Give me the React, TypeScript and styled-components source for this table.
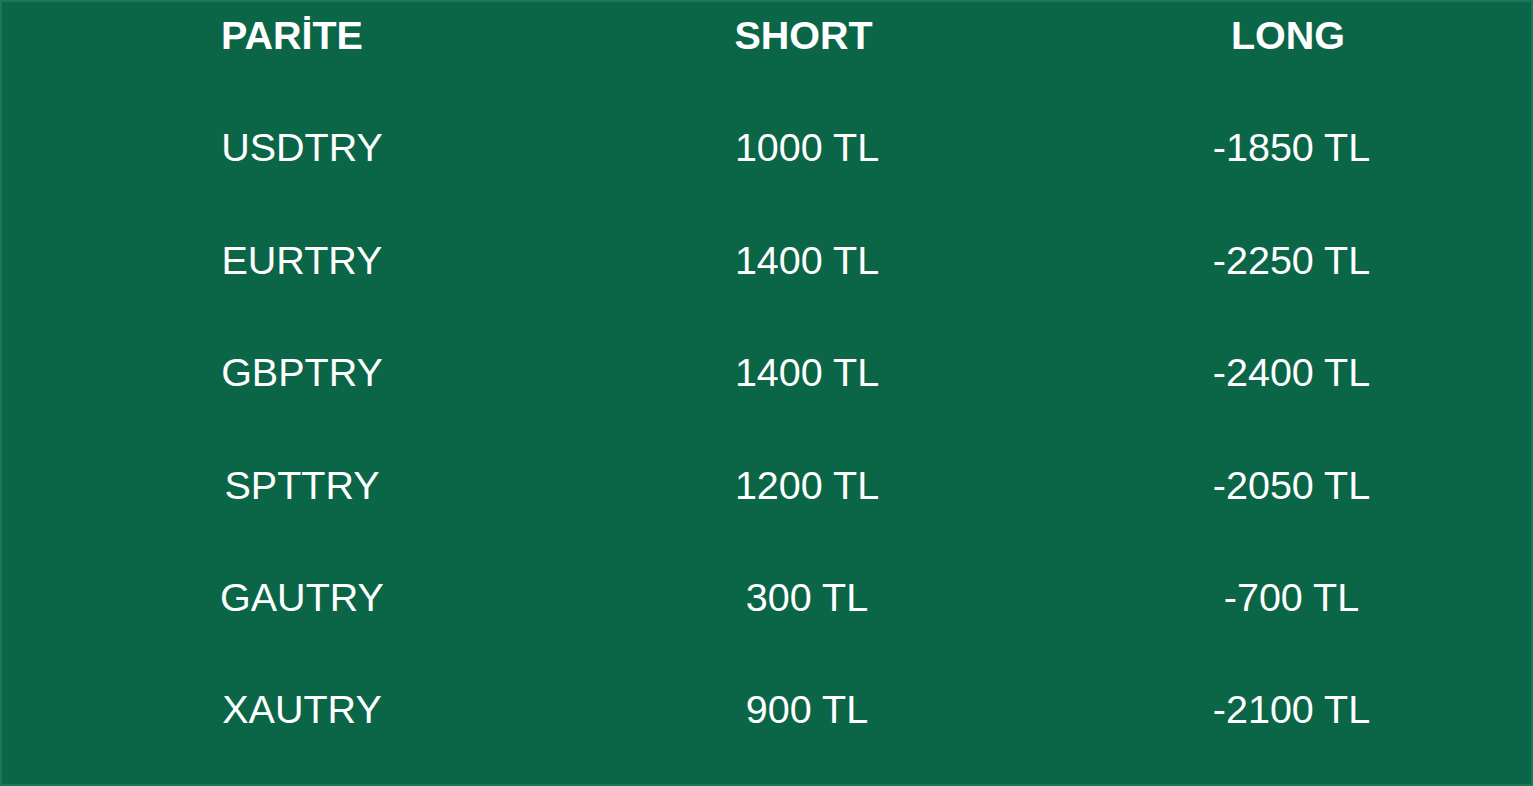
import React from "react";
import styled, { createGlobalStyle } from "styled-components";

const Global = createGlobalStyle`
  html, body { margin: 0; padding: 0; background: #0b6648; }
  * { box-sizing: border-box; }
`;

const Board = styled.div`
  width: 1533px;
  height: 786px;
  background: #0b6648;
  border: 2px solid #16795a;
  font-family: "Liberation Sans", Arial, sans-serif;
  color: #ffffff;
  display: flex;
  flex-direction: column;
  overflow: hidden;
`;

const Row = styled.div<{ $header?: boolean }>`
  display: grid;
  grid-template-columns: 500px 510px 459px;
  align-items: center;
  height: ${(p) => (p.$header ? "68px" : "112.4px")};
  margin-bottom: ${(p) => (p.$header ? "22px" : "0")};
  padding-left: 50px;
`;

const Cell = styled.div<{ $bold?: boolean; $shift?: number }>`
  text-align: center;
  font-size: 39.5px;
  font-weight: ${(p) => (p.$bold ? 700 : 400)};
  line-height: 1.15;
  white-space: nowrap;
  padding-right: ${(p) => (p.$shift ? `${p.$shift}px` : "0")};
`;

const rows: [string, string, string][] = [
  ["USDTRY", "1000 TL", "-1850 TL"],
  ["EURTRY", "1400 TL", "-2250 TL"],
  ["GBPTRY", "1400 TL", "-2400 TL"],
  ["SPTTRY", "1200 TL", "-2050 TL"],
  ["GAUTRY", "300 TL", "-700 TL"],
  ["XAUTRY", "900 TL", "-2100 TL"],
];

export default function App() {
  return (
    <>
      <Global />
      <Board>
        <Row $header>
          <Cell $bold $shift={20}>PARİTE</Cell>
          <Cell $bold $shift={7}>SHORT</Cell>
          <Cell $bold $shift={7}>LONG</Cell>
        </Row>
        {rows.map((r) => (
          <Row key={r[0]}>
            <Cell>{r[0]}</Cell>
            <Cell>{r[1]}</Cell>
            <Cell>{r[2]}</Cell>
          </Row>
        ))}
      </Board>
    </>
  );
}
